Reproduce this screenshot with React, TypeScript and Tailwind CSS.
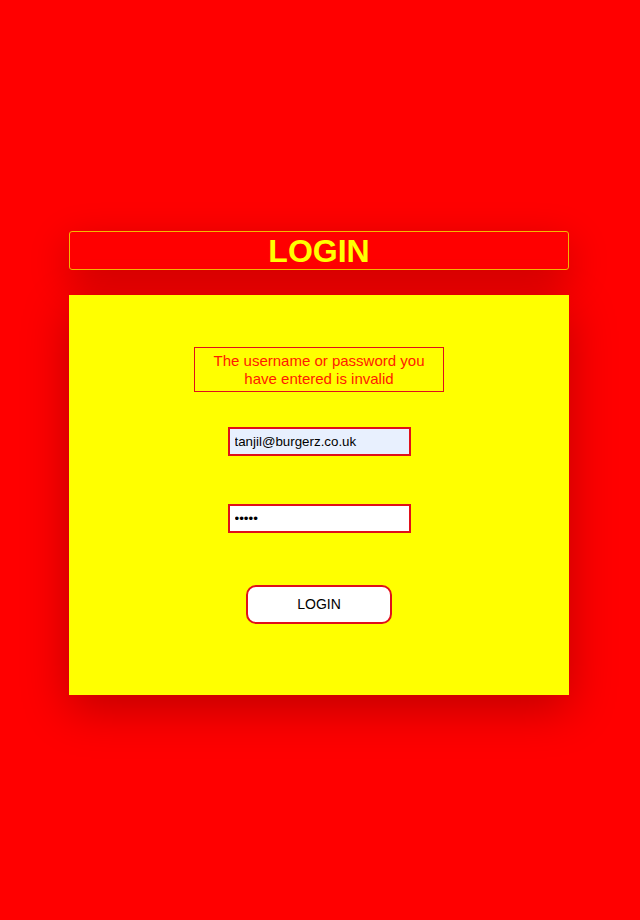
import React, { useState } from 'react';

const App = () => {
  const [email, setEmail] = useState('tanjil@burgerz.co.uk');
  const [password, setPassword] = useState('12345');

  return (
    <div className="min-h-[920px] w-full bg-[#ff0000] pt-[231px] font-['Liberation_Sans',Arial,sans-serif]">
      <div className="ml-[69px] w-[500px]">
        {/* Titulo */}
        <div className="flex h-[39px] items-center justify-center rounded-[3px] border border-[#f5b800] bg-[#ff0000] shadow-[0_12px_40px_rgba(0,0,0,0.22)]">
          <h1 className="text-[32px] font-bold leading-none text-[#ffff00]">LOGIN</h1>
        </div>

        {/* Tarjeta */}
        <div className="mt-[25px] flex h-[400px] flex-col items-center bg-[#ffff00] pt-[52px] shadow-[0_14px_44px_rgba(0,0,0,0.25)]">
          <div className="flex h-[45px] w-[250px] items-center justify-center border border-[#e0101a] text-center text-[15px] leading-[18px] text-[#ff1a00]">
            The username or password you
            <br />
            have entered is invalid
          </div>

          <input
            type="text"
            value={email}
            onChange={(e) => setEmail(e.target.value)}
            className="mt-[35px] h-[29px] w-[183px] border-2 border-[#e0101a] bg-[#e8f0fe] px-[5px] text-[13.33px] text-black outline-none"
          />

          <input
            type="password"
            value={password}
            onChange={(e) => setPassword(e.target.value)}
            className="mt-[48px] h-[29px] w-[183px] border-2 border-[#e0101a] bg-white px-[5px] text-[13.33px] text-black outline-none"
          />

          <button className="mt-[52px] h-[39px] w-[146px] rounded-[10px] border-2 border-[#e0101a] bg-white text-[14px] text-black">
            LOGIN
          </button>
        </div>
      </div>
    </div>
  );
};

export default App;
